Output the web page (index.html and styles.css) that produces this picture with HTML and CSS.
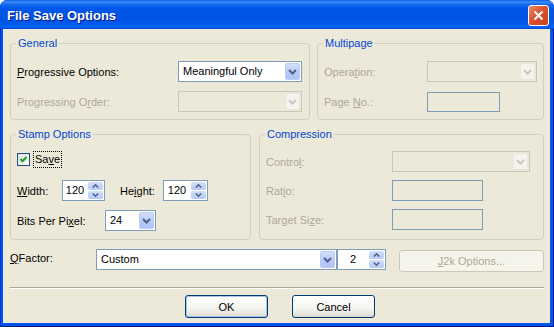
FILE: index.html
```html
<!DOCTYPE html>
<html lang="en">
<head>
  <meta charset="UTF-8" />
  <title>File Save Options</title>
  <link rel="stylesheet" href="styles.css">
</head>
<body>

  <svg class="defs" width="0" height="0">
    <symbol id="chev-down" viewBox="0 0 9 6">
      <polyline points="1,1 4.5,4.5 8,1" fill="none" stroke="currentColor" stroke-width="2"/>
    </symbol>
    <symbol id="spin-up" viewBox="0 0 7 4">
      <polyline points="0.8,3.5 3.5,0.8 6.2,3.5" fill="none" stroke="currentColor" stroke-width="1.5"/>
    </symbol>
    <symbol id="spin-down" viewBox="0 0 7 4">
      <polyline points="0.8,0.5 3.5,3.2 6.2,0.5" fill="none" stroke="currentColor" stroke-width="1.5"/>
    </symbol>
  </svg>

  <div class="window">
    <div class="titlebar">
      <span class="title">File Save Options</span>
      <span class="close-btn">
        <svg width="11" height="11" viewBox="0 0 11 11"><path d="M1.5 1.5 L9.5 9.5 M9.5 1.5 L1.5 9.5" stroke="#fff" stroke-width="2"/></svg>
      </span>
    </div>

    <div class="client">

      <div class="group-row top-row">
        <fieldset class="group general">
          <legend>General</legend>
          <div class="field-grid general-grid">
            <span class="label"><u>P</u>rogressive Options:</span>
            <div class="combo">
              <span class="combo-text">Meaningful Only</span>
              <span class="drop-btn"><svg width="9" height="6"><use href="#chev-down"/></svg></span>
            </div>
            <span class="label disabled">Progressing O<u>r</u>der:</span>
            <div class="combo disabled">
              <span class="combo-text"></span>
              <span class="drop-btn"><svg width="9" height="6"><use href="#chev-down"/></svg></span>
            </div>
          </div>
        </fieldset>

        <fieldset class="group multipage">
          <legend>Multipage</legend>
          <div class="field-grid multipage-grid">
            <span class="label disabled">Opera<u>t</u>ion:</span>
            <div class="combo disabled">
              <span class="combo-text"></span>
              <span class="drop-btn"><svg width="9" height="6"><use href="#chev-down"/></svg></span>
            </div>
            <span class="label disabled">Page <u>N</u>o.:</span>
            <div class="textbox disabled page-box"></div>
          </div>
        </fieldset>
      </div>

      <div class="group-row mid-row">
        <fieldset class="group stamp">
          <legend>Stamp Options</legend>
          <div class="stamp-body">
            <div class="save-row">
              <span class="checkbox">
                <svg width="9" height="9" viewBox="0 0 9 9"><path d="M1.5 4 L3.5 6.2 L7.5 2" fill="none" stroke="#21A121" stroke-width="2"/></svg>
              </span>
              <span class="focus-label">Sa<u>v</u>e</span>
            </div>

            <div class="size-row">
              <span class="label width-label"><u>W</u>idth:</span>
              <div class="spin width-spin">
                <span class="spin-text">120</span>
                <span class="spin-btns">
                  <span class="spin-btn"><svg width="7" height="4"><use href="#spin-up"/></svg></span>
                  <span class="spin-btn"><svg width="7" height="4"><use href="#spin-down"/></svg></span>
                </span>
              </div>
              <span class="label height-label">He<u>i</u>ght:</span>
              <div class="spin height-spin">
                <span class="spin-text">120</span>
                <span class="spin-btns">
                  <span class="spin-btn"><svg width="7" height="4"><use href="#spin-up"/></svg></span>
                  <span class="spin-btn"><svg width="7" height="4"><use href="#spin-down"/></svg></span>
                </span>
              </div>
            </div>

            <div class="bits-row">
              <span class="label bits-label">Bits Per Pi<u>x</u>el:</span>
              <div class="combo bits-combo">
                <span class="combo-text">24</span>
                <span class="drop-btn"><svg width="9" height="6"><use href="#chev-down"/></svg></span>
              </div>
            </div>
          </div>
        </fieldset>

        <fieldset class="group compression">
          <legend>Compression</legend>
          <div class="field-grid compression-grid">
            <span class="label disabled">Contro<u>l</u>:</span>
            <div class="combo disabled">
              <span class="combo-text"></span>
              <span class="drop-btn"><svg width="9" height="6"><use href="#chev-down"/></svg></span>
            </div>
            <span class="label disabled">Rat<u>i</u>o:</span>
            <div class="textbox disabled ratio-box"></div>
            <span class="label disabled">Target Si<u>z</u>e:</span>
            <div class="textbox disabled ratio-box"></div>
          </div>
        </fieldset>
      </div>

      <div class="qfactor-row">
        <span class="label qfactor-label"><u>Q</u>Factor:</span>
        <div class="combo qfactor-combo">
          <span class="combo-text">Custom</span>
          <span class="drop-btn"><svg width="9" height="6"><use href="#chev-down"/></svg></span>
        </div>
        <div class="spin qfactor-spin">
          <span class="spin-text">2</span>
          <span class="spin-btns">
            <span class="spin-btn"><svg width="7" height="4"><use href="#spin-up"/></svg></span>
            <span class="spin-btn"><svg width="7" height="4"><use href="#spin-down"/></svg></span>
          </span>
        </div>
        <span class="button disabled j2k-btn"><u>J</u>2k Options...</span>
      </div>

      <div class="separator"></div>

      <div class="button-row">
        <span class="button default">OK</span>
        <span class="button">Cancel</span>
      </div>

    </div>
  </div>

</body>
</html>
```

FILE: styles.css
```css
body {
  margin: 0;
  font-family: "Liberation Sans", Arial, sans-serif;
  font-size: 11px;
  color: #000;
}

.defs {
  position: absolute;
}

u {
  text-decoration-thickness: 1px;
  text-underline-offset: 1px;
}

/* window frame */

.window {
  width: 554px;
  height: 327px;
  box-sizing: border-box;
  display: flex;
  flex-direction: column;
  background: #0055EA;
  border-radius: 8px 8px 0 0;
  box-shadow: inset 1px 0 #0831D9, inset -1px 0 #00138C, inset 0 -1px #00138C;
}

.titlebar {
  height: 29px;
  flex: none;
  display: flex;
  align-items: center;
  justify-content: space-between;
  padding: 0 5px 0 7px;
  border-radius: 7px 7px 0 0;
  background: linear-gradient(to bottom,
    #0A5EE8 0px, #3D8FF6 2px, #1A6CF0 4px, #0058E8 8px,
    #0054E3 18px, #005AEC 24px, #0064F6 27px, #0048D8 29px);
}

.title {
  color: #fff;
  font-weight: bold;
  font-size: 13px;
  margin-top: 1px;
  text-shadow: 1px 1px #0A1883;
}

.close-btn {
  width: 21px;
  height: 21px;
  box-sizing: border-box;
  margin-top: 2px;
  border: 1px solid #fff;
  border-radius: 3px;
  background: linear-gradient(135deg, #E98A6C, #D9532F 45%, #C7401E);
  display: flex;
  align-items: center;
  justify-content: center;
}

.client {
  flex: 1;
  margin: 0 4px 4px 3px;
  padding: 8px 6px 0 7px;
  background: #ECE9D8;
  display: flex;
  flex-direction: column;
}

/* group boxes */

.group-row {
  display: flex;
  gap: 7px;
}

.top-row {
  height: 83px;
}

.mid-row {
  height: 112px;
  margin-top: 8px;
  gap: 8px;
}

.group {
  margin: 0;
  padding: 0 6px;
  min-width: 0;
  box-sizing: border-box;
  border: 1px solid #D0D0BF;
  border-radius: 4px;
}

.group legend {
  padding: 0 2px;
  margin-left: -1px;
  line-height: 13px;
  color: #0046D5;
}

.general { width: 300px; }
.multipage { width: 227px; }
.stamp { width: 241px; }
.compression { width: 285px; }

.field-grid {
  display: grid;
  grid-auto-rows: 21px;
  align-items: center;
  padding-top: 11px;
}

.general-grid {
  grid-template-columns: 161px 124px;
  row-gap: 9px;
}

.multipage-grid {
  grid-template-columns: 103px 110px;
  row-gap: 9px;
}

.compression-grid {
  grid-template-columns: 126px 138px;
  row-gap: 8px;
  padding-top: 10px;
}

.label {
  white-space: nowrap;
}

.label.disabled {
  color: #ACA899;
}

/* controls */

.combo {
  height: 21px;
  box-sizing: border-box;
  display: flex;
  border: 1px solid #7F9DB9;
  background: #fff;
}

.combo-text {
  flex: 1;
  padding-left: 4px;
  line-height: 19px;
  white-space: nowrap;
}

.drop-btn {
  width: 15px;
  margin: 1px;
  box-sizing: border-box;
  display: flex;
  align-items: center;
  justify-content: center;
  border: 1px solid #BACBF5;
  border-radius: 2px;
  background: linear-gradient(to bottom, #D2DEFB, #B6C9F7 60%, #AFC3F5);
  color: #4D6185;
}

.combo.disabled {
  border-color: #C9C7BA;
  background: #ECE9D8;
}

.combo.disabled .drop-btn {
  border-color: #E8E6DC;
  background: #F4F3EE;
  color: #C9C7BA;
}

.textbox {
  height: 21px;
  box-sizing: border-box;
  border: 1px solid #7F9DB9;
  background: #fff;
}

.textbox.disabled {
  background: #ECE9D8;
}

.page-box {
  width: 73px;
  height: 20px;
}

.ratio-box {
  width: 91px;
  height: 21px;
}

.spin {
  height: 21px;
  box-sizing: border-box;
  display: flex;
  border: 1px solid #7F9DB9;
  background: #fff;
}

.spin-text {
  flex: 1;
  text-align: center;
  line-height: 19px;
}

.spin-btns {
  width: 15px;
  margin: 1px;
  display: flex;
  flex-direction: column;
  gap: 1px;
}

.spin-btn {
  flex: 1;
  display: flex;
  align-items: center;
  justify-content: center;
  border-radius: 2px;
  background: linear-gradient(to bottom, #D2DEFB, #B6C9F7);
  color: #4D6185;
}

/* stamp options */

.stamp-body {
  padding-top: 10px;
}

.save-row {
  height: 17px;
  display: flex;
  align-items: center;
}

.checkbox {
  width: 13px;
  height: 13px;
  box-sizing: border-box;
  border: 1px solid #1C5180;
  background: linear-gradient(135deg, #DCDCD7, #fff);
  display: flex;
  align-items: center;
  justify-content: center;
}

.focus-label {
  margin-left: 3px;
  padding: 1px 1px;
  border: 1px dotted #000;
  line-height: 13px;
}

.size-row {
  height: 21px;
  margin-top: 12px;
  display: flex;
  align-items: center;
}

.width-label { width: 45px; }
.width-spin { width: 43px; }
.height-label { width: 43px; margin-left: 15px; }
.height-spin { width: 45px; }

.bits-row {
  height: 21px;
  margin-top: 9px;
  display: flex;
  align-items: center;
}

.bits-label { width: 88px; }
.bits-combo { width: 51px; }

/* bottom rows */

.qfactor-row {
  height: 21px;
  margin-top: 9px;
  display: flex;
  align-items: flex-start;
}

.qfactor-label {
  width: 86px;
  line-height: 19px;
}

.qfactor-combo { width: 241px; }
.qfactor-spin { width: 49px; }

.button {
  height: 23px;
  box-sizing: border-box;
  display: flex;
  align-items: center;
  justify-content: center;
  border: 1px solid #003C74;
  border-radius: 3px;
  background: linear-gradient(to bottom, #FFFFFF, #F4F4F0 60%, #E3E2DA 90%, #D6D0C5);
}

.button.default {
  box-shadow: inset 0 0 0 1px #A9C2EE;
}

.button.disabled {
  border-color: #C9C7BA;
  background: #F5F4EA;
  color: #ACA899;
}

.j2k-btn {
  width: 145px;
  height: 22px;
  margin: 1px 0 0 13px;
}

.separator {
  margin-top: 17px;
  height: 0;
  border-top: 1px solid #ACA899;
  border-bottom: 1px solid #fff;
}

.button-row {
  display: flex;
  gap: 24px;
  margin-top: 6px;
  padding-left: 175px;
}

.button-row .button {
  width: 83px;
}
```
